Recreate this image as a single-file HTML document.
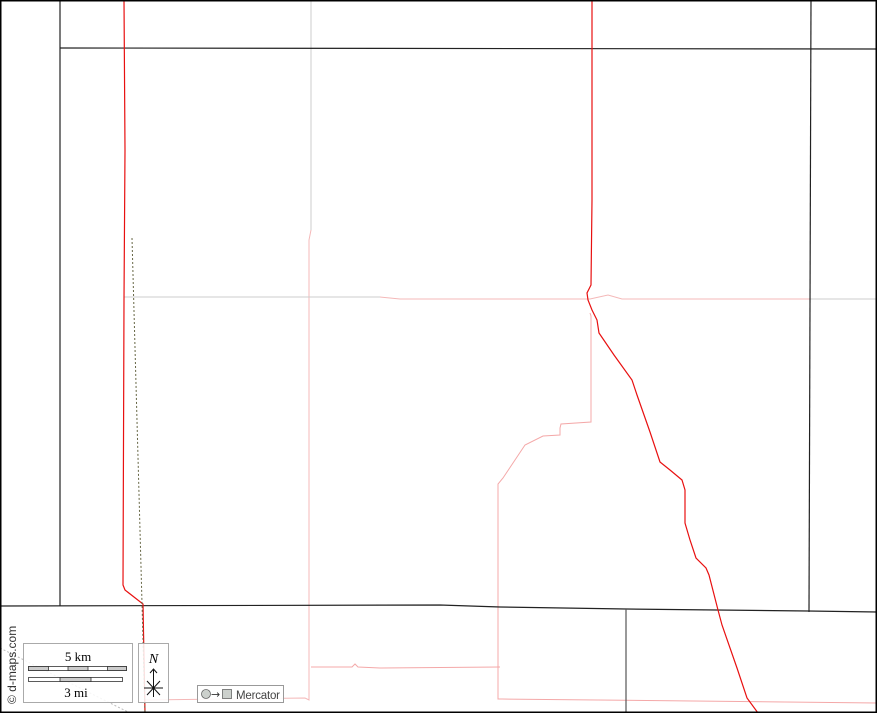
<!DOCTYPE html>
<html><head><style>html,body{margin:0;padding:0;background:#fff}svg{display:block}</style></head>
<body>
<svg width="877" height="713" viewBox="0 0 877 713" xmlns="http://www.w3.org/2000/svg" font-family="Liberation Serif, serif">
<rect x="0" y="0" width="877" height="713" fill="#fff"/>
<g fill="none" stroke-width="1">
<path d="M311 0 L311 230 L309 240 L309 700 L305 698 L145 700" stroke="#f4b8b8"/>
<path d="M311 0 L311 230" stroke="#ccc"/>
<path d="M124 297 L380 297 L400 299 L590 299 L608 295 L622 299 L877 299" stroke="#f4b8b8"/>
<path d="M124 297 L380 297" stroke="#ccc"/>
<path d="M810 299 L877 299" stroke="#ccc"/>
<path d="M590 313 L591 316 L591 422 L561 424 L560 428 L560 435 L543 436 L525 445 L503 478 L498 484 L498 699 L502 699 L877 703" stroke="#f4a8a8"/>
<path d="M311 667 L352 667 L355 664 L358 667 L380 668 L500 667" stroke="#f4a8a8"/>
<path d="M0 648 L130 713" stroke="#bbb" stroke-dasharray="2,2"/>
</g>
<g fill="none" stroke="#222" stroke-width="1.2">
<path d="M60 0 L60 606"/>
<path d="M60 48 L877 49"/>
<path d="M811 0 L809 612"/>
<path d="M0 606 L440 605 L500 607 L626 609 L808 611 L877 612"/>
<path d="M626 609 L626 713" stroke="#555"/>
</g>
<g fill="none" stroke="#e81010" stroke-width="1.2">
<path d="M124 0 L125 150 L124 300 L123 585 L125 590 L143 604 L145 713"/>
<path d="M592 0 L592 200 L591 285 L587 293 L588 300 L592 310 L597 320 L599 333 L614 355 L632 380 L637 395 L650 432 L660 462 L670 470 L682 480 L685 490 L685 523 L690 540 L696 558 L706 568 L709 575 L718 610 L722 625 L737 668 L747 698 L758 713"/>
</g>
<path d="M132 238 L145 713" stroke="#664" stroke-width="1" stroke-dasharray="2,2" fill="none"/>
<rect x="23.5" y="643.5" width="109" height="59" fill="#fff" fill-opacity="0.85" stroke="#aaa"/>
<text x="78" y="661" font-size="13" text-anchor="middle">5 km</text>
<g stroke="#333" stroke-width="0.8">
<rect x="28.5" y="666.5" width="98" height="4" fill="#fff"/>
<rect x="28.5" y="666.5" width="20" height="4" fill="#ccc"/>
<rect x="68" y="666.5" width="20" height="4" fill="#ccc"/>
<rect x="107.5" y="666.5" width="19" height="4" fill="#ccc"/>
<rect x="28.5" y="677.5" width="94" height="4" fill="#fff"/>
<rect x="60" y="677.5" width="31" height="4" fill="#ccc"/>
</g>
<text x="76" y="697" font-size="13" text-anchor="middle">3 mi</text>
<rect x="138.5" y="643.5" width="30" height="59" fill="#fff" fill-opacity="0.85" stroke="#aaa"/>
<text x="153.5" y="663" font-size="14" font-style="italic" text-anchor="middle">N</text>
<g stroke="#111" stroke-width="1" fill="none">
<path d="M153.5 670 L153.5 697 M150 673 L153.5 669 L157 673 M144 688 L163 688 M147 681 L160 695 M160 681 L147 695"/>
</g>
<rect x="197.5" y="685.5" width="86" height="17" fill="#fff" fill-opacity="0.9" stroke="#999"/>
<circle cx="206" cy="694" r="4.5" fill="#ccd0cc" stroke="#666" stroke-width="0.8"/>
<text x="211" y="698" font-size="11" font-family="DejaVu Sans, sans-serif" fill="#333">→</text>
<rect x="222.5" y="689.5" width="9" height="9" fill="#ccd0cc" stroke="#666" stroke-width="0.8"/>
<text x="236" y="699" font-size="11.5" font-family="Liberation Sans, sans-serif" fill="#444" textLength="44">Mercator</text>
<text transform="translate(16,704) rotate(-90)" font-size="12" font-family="Liberation Sans, sans-serif" fill="#333">© d-maps.com</text>
<rect x="0.75" y="0.75" width="875.5" height="711.5" fill="none" stroke="#000" stroke-width="1.5"/>
</svg>
</body></html>
